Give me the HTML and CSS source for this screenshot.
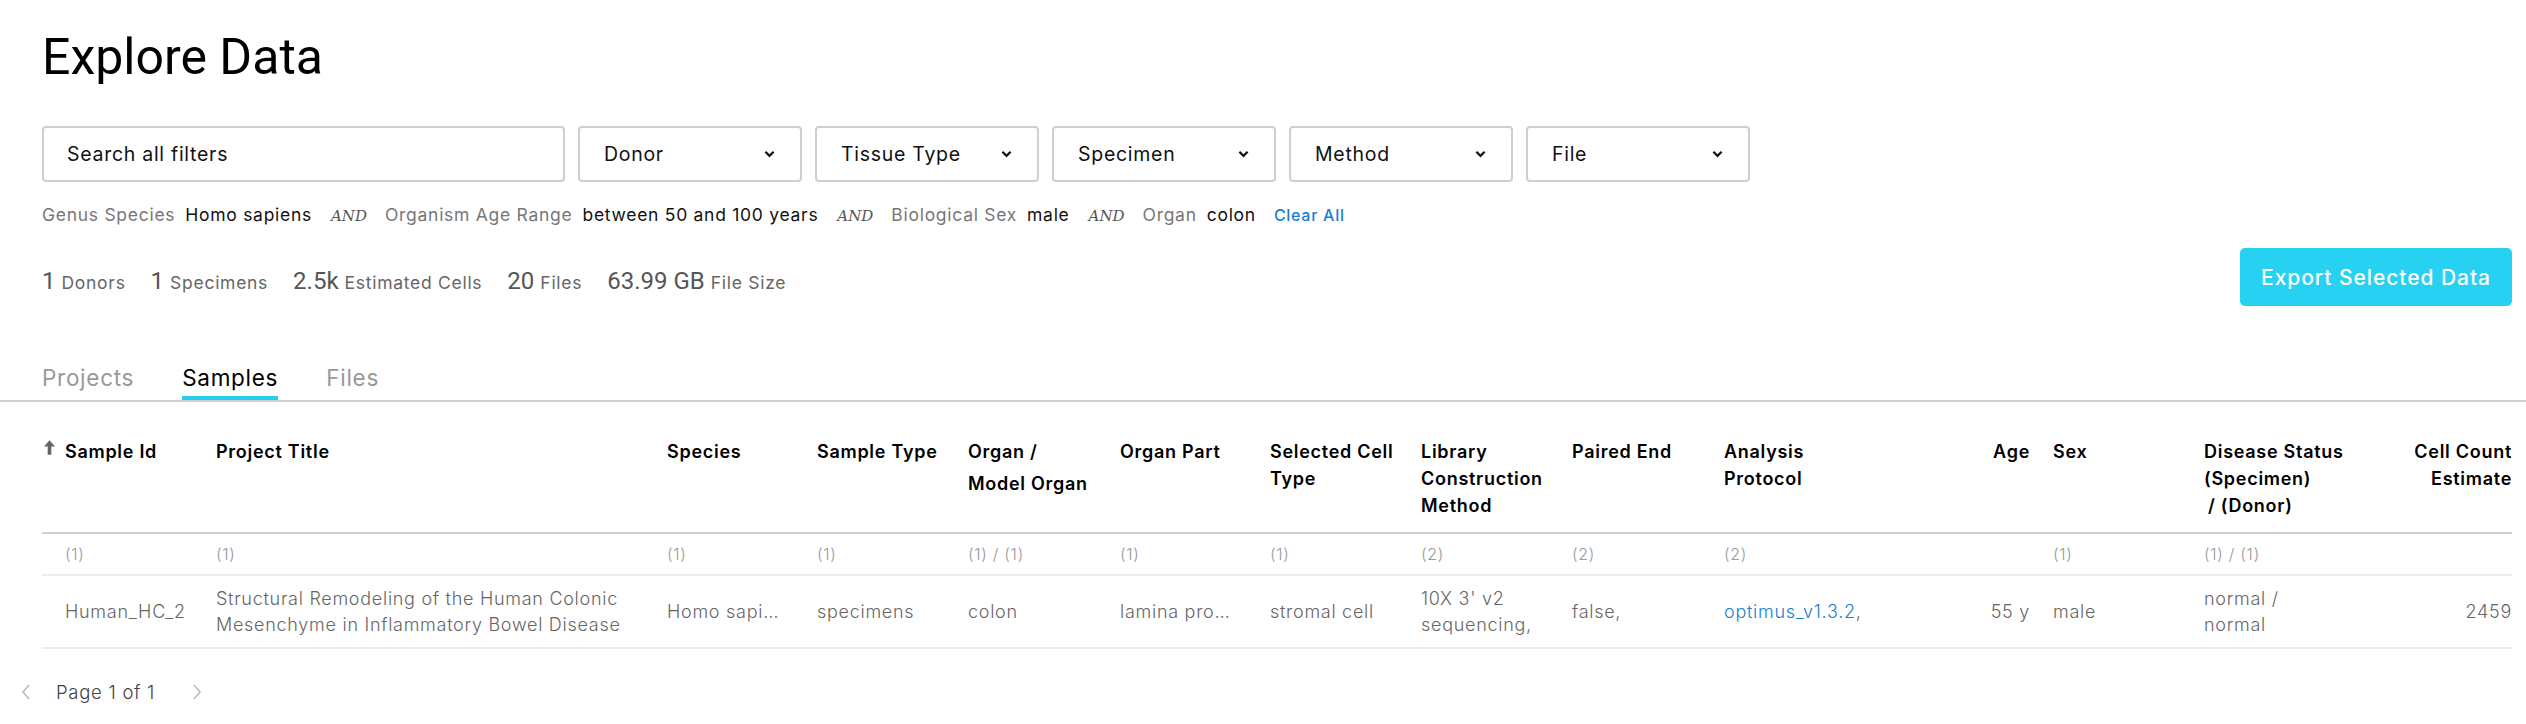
FILE: index.html
```html
<!DOCTYPE html>
<html lang="en">
<head>
<meta charset="utf-8">
<title>Explore Data</title>
<link rel="stylesheet" href="styles.css">
</head>
<body>
<div class="page">
  <h1 class="title">Explore Data</h1>

  <div class="filters">
    <div class="search">Search all filters</div>
    <div class="dropdown"><span>Donor</span><svg class="chev" viewBox="0 0 12 8"><polyline points="1.5,1.5 6,6 10.5,1.5"/></svg></div>
    <div class="dropdown"><span>Tissue Type</span><svg class="chev" viewBox="0 0 12 8"><polyline points="1.5,1.5 6,6 10.5,1.5"/></svg></div>
    <div class="dropdown"><span>Specimen</span><svg class="chev" viewBox="0 0 12 8"><polyline points="1.5,1.5 6,6 10.5,1.5"/></svg></div>
    <div class="dropdown"><span>Method</span><svg class="chev" viewBox="0 0 12 8"><polyline points="1.5,1.5 6,6 10.5,1.5"/></svg></div>
    <div class="dropdown"><span>File</span><svg class="chev" viewBox="0 0 12 8"><polyline points="1.5,1.5 6,6 10.5,1.5"/></svg></div>
  </div>

  <div class="chips">
    <span class="chip-label">Genus Species</span><span class="chip-value">Homo sapiens</span>
    <span class="and">AND</span>
    <span class="chip-label">Organism Age Range</span><span class="chip-value">between 50 and 100 years</span>
    <span class="and">AND</span>
    <span class="chip-label">Biological Sex</span><span class="chip-value">male</span>
    <span class="and">AND</span>
    <span class="chip-label">Organ</span><span class="chip-value">colon</span>
    <a class="clear" href="#">Clear All</a>
  </div>

  <div class="summary">
    <div class="stats">
      <span class="stat"><span class="num">1</span><span class="lbl">Donors</span></span>
      <span class="stat"><span class="num">1</span><span class="lbl">Specimens</span></span>
      <span class="stat"><span class="num">2.5k</span><span class="lbl">Estimated Cells</span></span>
      <span class="stat"><span class="num">20</span><span class="lbl">Files</span></span>
      <span class="stat"><span class="num">63.99 GB</span><span class="lbl">File Size</span></span>
    </div>
    <button class="export">Export Selected Data</button>
  </div>

  <div class="tabs">
    <span class="tab">Projects</span>
    <span class="tab active">Samples</span>
    <span class="tab">Files</span>
  </div>

  <div class="table">
    <div class="row head">
      <div class="cell sorted"><svg class="sort" viewBox="0 0 12 16"><path d="M6 0 L12 7 L8 7 L8 16 L4 16 L4 7 L0 7 Z"/></svg>Sample Id</div>
      <div class="cell">Project Title</div>
      <div class="cell">Species</div>
      <div class="cell">Sample Type</div>
      <div class="cell"><div>Organ /</div><div class="sub">Model Organ</div></div>
      <div class="cell">Organ Part</div>
      <div class="cell">Selected Cell Type</div>
      <div class="cell">Library Construction Method</div>
      <div class="cell">Paired End</div>
      <div class="cell">Analysis Protocol</div>
      <div class="cell right">Age</div>
      <div class="cell">Sex</div>
      <div class="cell"><div>Disease Status (Specimen)</div><div class="donor">/ (Donor)</div></div>
      <div class="cell right">Cell Count Estimate</div>
    </div>

    <div class="row counts">
      <div class="cell">(1)</div>
      <div class="cell">(1)</div>
      <div class="cell">(1)</div>
      <div class="cell">(1)</div>
      <div class="cell">(1) / (1)</div>
      <div class="cell">(1)</div>
      <div class="cell">(1)</div>
      <div class="cell">(2)</div>
      <div class="cell">(2)</div>
      <div class="cell">(2)</div>
      <div class="cell right"></div>
      <div class="cell">(1)</div>
      <div class="cell">(1) / (1)</div>
      <div class="cell right"></div>
    </div>

    <div class="row data">
      <div class="cell">Human_HC_2</div>
      <div class="cell">Structural Remodeling of the Human Colonic Mesenchyme in Inflammatory Bowel Disease</div>
      <div class="cell"><span class="ellip">Homo sapiens</span></div>
      <div class="cell">specimens</div>
      <div class="cell">colon</div>
      <div class="cell"><span class="ellip">lamina propria</span></div>
      <div class="cell">stromal cell</div>
      <div class="cell">10X 3' v2<br>sequencing,</div>
      <div class="cell">false,</div>
      <div class="cell"><a class="link" href="#">optimus_v1.3.2</a>,</div>
      <div class="cell right">55 y</div>
      <div class="cell">male</div>
      <div class="cell">normal /<br>normal</div>
      <div class="cell right">2459</div>
    </div>
  </div>
</div>

<div class="pager">
  <svg class="pg" viewBox="0 0 12 18"><polyline points="9,2 3,9 9,16"/></svg>
  <span class="pg-text">Page 1 of 1</span>
  <svg class="pg" viewBox="0 0 12 18"><polyline points="3,2 9,9 3,16"/></svg>
</div>
</body>
</html>
```

FILE: styles.css
```css
* { box-sizing: border-box; }

body {
  margin: 0;
  background: #fff;
  font-family: Inter, "Open Sans", sans-serif;
  color: #000;
  letter-spacing: 0.045em;
}

.page {
  padding: 0 14px 0 42px;
}

.title {
  margin: 0;
  padding-top: 27px;
  font-family: Roboto, "Liberation Sans", sans-serif;
  font-weight: 400;
  font-size: 50px;
  line-height: 60px;
  letter-spacing: 0;
  color: #000;
}

/* filter bar */
.filters {
  display: flex;
  gap: 13px;
  margin-top: 39px;
  height: 56px;
}

.search,
.dropdown {
  height: 56px;
  border: 2px solid #cfcfcf;
  border-radius: 4px;
  font-size: 19.5px;
  display: flex;
  align-items: center;
  color: #111;
}

.search {
  width: 523px;
  padding-left: 23px;
}

.dropdown {
  width: 224px;
  padding: 0 25px 0 24px;
  justify-content: space-between;
}

.chev {
  width: 11px;
  height: 8px;
  fill: none;
  stroke: #111;
  stroke-width: 2.4;
}

/* chips */
.chips {
  display: flex;
  align-items: baseline;
  margin-top: 20px;
  height: 26px;
  font-size: 17.5px;
  line-height: 26px;
}

.chip-label {
  color: #777;
  margin-right: 10px;
}

.chip-value {
  color: #111;
}

.and {
  font-family: "DejaVu Serif", "Liberation Serif", serif;
  font-style: italic;
  font-size: 15px;
  color: #555;
  letter-spacing: 0;
  margin: 0 18px 0 19px;
}

.clear {
  margin-left: 18px;
  font-size: 16px;
  color: #1c7cd5;
  text-decoration: none;
  font-weight: 500;
}

/* summary */
.summary {
  display: flex;
  justify-content: space-between;
  align-items: center;
  margin-top: 20px;
  height: 58px;
}

.stats {
  display: flex;
  gap: 25px;
  padding-top: 8px;
  align-items: baseline;
}

.stat {
  display: flex;
  align-items: baseline;
  gap: 6px;
}

.num {
  font-family: Roboto, "Liberation Sans", sans-serif;
  font-size: 24px;
  color: #555;
  letter-spacing: 0;
}

.lbl {
  font-size: 17.5px;
  color: #666;
}

.export {
  width: 272px;
  height: 58px;
  border: none;
  border-radius: 5px;
  background: #27d1f2;
  color: #fff;
  font-family: Inter, "Open Sans", sans-serif;
  font-size: 21px;
  font-weight: 500;
  letter-spacing: 0.045em;
}

/* tabs */
.tabs {
  display: flex;
  gap: 48px;
  margin: 60px -14px 0 -42px;
  padding-left: 42px;
  border-bottom: 2px solid #cfcfcf;
}

.tab {
  font-size: 22.5px;
  line-height: 24px;
  padding-bottom: 6px;
  border-bottom: 4px solid transparent;
  color: #999;
}

.tab.active {
  color: #000;
  border-bottom-color: #27cdef;
}

/* table */
.table {
  margin-top: 36px;
}

.row {
  display: grid;
  grid-template-columns: 151px 451px 150px 151px 152px 150px 151px 151px 152px 151px 178px 151px 200px 131px;
}

.cell {
  padding-left: 23px;
  min-width: 0;
}

.cell.right {
  text-align: right;
}

.head {
  border-bottom: 2px solid #cfcfcf;
  padding-bottom: 13px;
  font-size: 18px;
  font-weight: 600;
  line-height: 27px;
}

.head .sorted {
  position: relative;
}

.sort {
  position: absolute;
  left: 2px;
  top: 2px;
  width: 11px;
  height: 15px;
  fill: #666;
}

.head .sub {
  margin-top: 5px;
}

.head .donor {
  padding-left: 4px;
}

.counts {
  height: 42px;
  align-items: center;
  border-bottom: 2px solid #ececec;
  font-size: 16px;
  font-weight: 300;
  color: #999;
}

.data {
  height: 73px;
  align-items: center;
  border-bottom: 2px solid #ececec;
  font-size: 18px;
  font-weight: 300;
  line-height: 26px;
  color: #666;
}

.ellip {
  display: block;
  overflow: hidden;
  white-space: nowrap;
  text-overflow: ellipsis;
  padding-right: 14px;
}

.link {
  color: #1c7cd5;
  text-decoration: none;
}

/* pager */
.pager {
  display: flex;
  align-items: center;
  margin-top: 30px;
  padding-left: 20px;
  height: 26px;
}

.pg {
  width: 12px;
  height: 18px;
  fill: none;
  stroke: #bbb;
  stroke-width: 1.6;
}

.pg-text {
  font-size: 18.5px;
  font-weight: 300;
  color: #444;
  margin: 0 36px 0 24px;
}
```
